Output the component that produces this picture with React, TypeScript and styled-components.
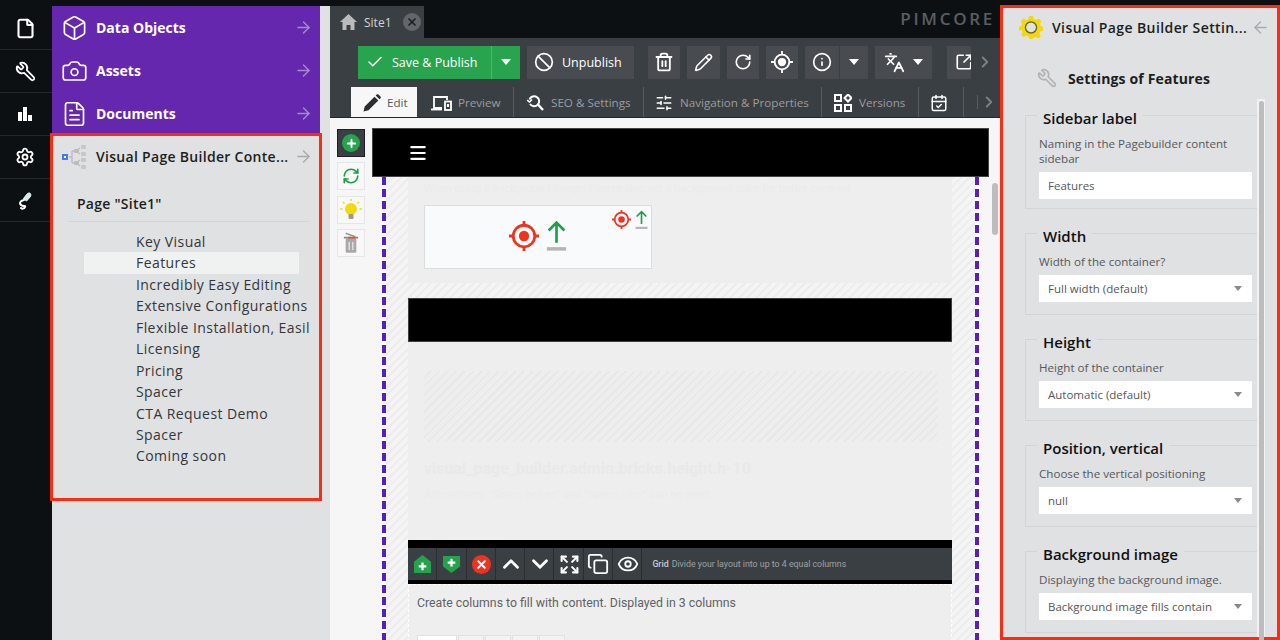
import React, { FC } from "react";
import styled, { createGlobalStyle } from "styled-components";
import {
  ArrowLeft,
  ArrowRight,
  Ban,
  Box,
  CalendarCheck,
  Camera,
  Check,
  ChevronDown,
  ChevronRight,
  ChevronUp,
  Copy,
  Expand,
  Eye,
  File,
  FileText,
  Info,
  Languages,
  Menu,
  Pencil,
  Plus,
  RefreshCw,
  RotateCw,
  Settings,
  SlidersHorizontal,
  SquareArrowOutUpRight,
  Trash2,
  Wrench,
  X,
} from "lucide-react";

const GlobalStyle = createGlobalStyle`
  html, body {
    margin: 0;
    padding: 0;
    background: #0d1013;
  }
  * {
    box-sizing: border-box;
  }
`;

const Page = styled.div`
  display: flex;
  width: 1280px;
  height: 640px;
  overflow: hidden;
  background: #0d1013;
  font-family: "Open Sans", "Liberation Sans", sans-serif;
`;

/* left rail */
const Rail = styled.nav`
  width: 52px;
  flex: none;
  display: flex;
  flex-direction: column;
  padding-top: 7px;
`;

const RailItem = styled.div`
  height: 43px;
  display: flex;
  align-items: center;
  justify-content: center;
  padding-right: 2px;
  color: #fff;
  border-bottom: 1px solid #24282c;
`;

const Mirrored = styled.span`
  display: flex;
  transform: scaleX(-1);
`;

const BarsGlyph = () => (
  <svg width="18" height="18" viewBox="0 0 18 18" fill="#fff">
    <rect x="2" y="7" width="4" height="9" />
    <rect x="7" y="2" width="4" height="14" />
    <rect x="12" y="10" width="4" height="6" />
  </svg>
);

const ProbeGlyph = () => (
  <svg width="20" height="22" viewBox="0 0 20 22" fill="none">
    <path d="M9 11c-4 1-5 3-3 5s5 0 4 2-3 2-4 1" stroke="#fff" strokeWidth="2" strokeLinecap="round" />
    <path d="M8.500 9.500l4-5c2.500-1.500 4 .5 3 3l-4 4.500z" fill="#cfe8f7" stroke="#fff" strokeWidth="1" />
  </svg>
);

/* tree column */
const TreeColumn = styled.aside`
  width: 278px;
  flex: none;
  margin-top: 6px;
  display: flex;
  flex-direction: column;
  background: #e0e1e3;
`;

const Accordion = styled.div`
  width: 268px;
  height: 129px;
  background: #6427ae;
`;

const AccordionRow = styled.div`
  height: 43px;
  display: flex;
  align-items: center;
  padding: 0 7px 0 9px;
  color: #fff;
  font-size: 14px;
  font-weight: 700;
`;

const RowIcon = styled.span`
  width: 27px;
  margin-right: 8px;
  display: flex;
  justify-content: center;
`;

const RowLabel = styled.span`
  flex: 1;
  min-width: 0;
  white-space: nowrap;
`;

const RowArrow = styled.span<{ $light?: boolean }>`
  display: flex;
  flex: none;
  color: ${(p) => (p.$light ? "#a9abae" : "#a58ac9")};
`;

const ContentPanel = styled.section`
  position: relative;
  width: 268px;
  height: 364px;
  outline: 3px solid #fb2c14;
  outline-offset: -1px;
  background: #e0e1e3;
`;

const PanelHead = styled.div`
  height: 43px;
  display: flex;
  align-items: center;
  padding: 0 7px 0 9px;
  color: #1c1e20;
  font-size: 14px;
  font-weight: 600;
  letter-spacing: 0.3px;
`;

const PageTitle = styled.div`
  margin: 15px 11px 0 16px;
  height: 29px;
  padding: 0 0 0 9px;
  border-bottom: 1px solid #d2d3d5;
  color: #1c1e20;
  font-size: 14px;
  font-weight: 600;
  letter-spacing: 0.25px;
  line-height: 22px;
`;

const ContentList = styled.ul`
  list-style: none;
  margin: 9px 0 0 32px;
  padding: 0;
`;

const ContentItem = styled.li<{ $active?: boolean }>`
  height: 21.45px;
  line-height: 21.45px;
  width: 215px;
  padding-left: 52px;
  white-space: nowrap;
  color: #33363a;
  font-size: 14px;
  letter-spacing: 0.43px;
  background: ${(p) => (p.$active ? "#f0f1f1" : "transparent")};
`;

const TreeGlyph = () => (
  <svg width="27" height="26" viewBox="0 0 27 26">
    <rect x="1" y="10" width="6" height="6" fill="#3f7ee8" />
    <rect x="3" y="12" width="2" height="2" fill="#fff" />
    <path d="M8 13h3M11 7v12M11 7h4M11 19h4M15 7l4-3M15 7l4 3M15 19l4-3M15 19l4 3" stroke="#bcbdbf" strokeWidth="1.4" fill="none" />
    <rect x="13" y="5" width="5" height="4" rx="1" fill="#bcbdbf" />
    <rect x="13" y="17" width="5" height="4" rx="1" fill="#bcbdbf" />
    <rect x="20" y="1" width="5" height="4" rx="1" fill="#c6c7c9" />
    <rect x="20" y="8" width="5" height="4" rx="1" fill="#c6c7c9" />
    <rect x="20" y="14" width="5" height="4" rx="1" fill="#c6c7c9" />
    <rect x="20" y="21" width="5" height="4" rx="1" fill="#c6c7c9" />
  </svg>
);

/* centre column */
const Centre = styled.main`
  width: 670px;
  flex: none;
  display: flex;
  flex-direction: column;
`;

const TabBar = styled.div`
  height: 38px;
  flex: none;
  display: flex;
  align-items: flex-end;
  justify-content: space-between;
  padding-right: 7px;
`;

const DocTab = styled.div`
  width: 94px;
  height: 32px;
  display: flex;
  align-items: center;
  padding-left: 10px;
  gap: 7px;
  background: #3a3f43;
  color: #d3d4d5;
  font-size: 12px;
`;

const TabClose = styled.span`
  width: 18px;
  height: 18px;
  margin-left: 4px;
  border-radius: 50%;
  display: flex;
  align-items: center;
  justify-content: center;
  background: #63666a;
  color: #1f2225;
`;

const Logo = styled.div`
  align-self: center;
  margin-top: -1px;
  margin-right: -2px;
  color: #5a5e62;
  font-size: 17px;
  font-weight: 600;
  letter-spacing: 2.7px;
`;

const Toolbar = styled.div`
  height: 47px;
  flex: none;
  display: flex;
  align-items: center;
  padding: 1px 0 0 28px;
  background: #3a3f43;
  color: #fff;
  overflow: hidden;
`;

const ToolGroup = styled.div<{ $gap?: number }>`
  display: flex;
  height: 33px;
  flex: none;
  margin-right: ${(p) => p.$gap ?? 7}px;
  overflow: hidden;
`;

const ToolButton = styled.div<{ $w: number; $pad?: number; $green?: boolean; $divider?: boolean }>`
  width: ${(p) => p.$w}px;
  height: 33px;
  flex: none;
  display: flex;
  align-items: center;
  justify-content: ${(p) => (p.$pad ? "flex-start" : "center")};
  gap: 8px;
  padding-left: ${(p) => p.$pad ?? 0}px;
  font-size: 12.5px;
  background: ${(p) => (p.$green ? "#28a44f" : "#484c50")};
  border-left: ${(p) => (p.$divider ? `1px solid ${p.$green ? "#4fb56f" : "#3a3f43"}` : "none")};
  svg {
    flex: none;
  }
`;

const Caret = styled.span<{ $size?: number; $color?: string }>`
  width: 0;
  height: 0;
  border-left: ${(p) => p.$size ?? 5.5}px solid transparent;
  border-right: ${(p) => p.$size ?? 5.5}px solid transparent;
  border-top: ${(p) => (p.$size ?? 5.5) + 1}px solid ${(p) => p.$color ?? "#fff"};
`;

const EndChevron = styled.span`
  display: flex;
  color: #7d8184;
`;

const TabStrip = styled.div`
  height: 33px;
  flex: none;
  display: flex;
  align-items: flex-end;
  padding-left: 21px;
  background: #3a3f43;
  border-bottom: 1px solid #24272a;
`;

const EditorTab = styled.div<{ $w: number; $pad: number; $gap?: number; $active?: boolean }>`
  width: ${(p) => p.$w}px;
  height: 30px;
  flex: none;
  display: flex;
  align-items: center;
  gap: ${(p) => p.$gap ?? 7}px;
  padding: 1px 0 0 ${(p) => p.$pad}px;
  font-size: 11.65px;
  white-space: nowrap;
  background: ${(p) => (p.$active ? "#f7f7f7" : "transparent")};
  color: ${(p) => (p.$active ? "#55585b" : "#9a9da0")};
  border-right: ${(p) => (p.$active ? "none" : "1px solid #595d61")};
  svg {
    color: ${(p) => (p.$active ? "#2b2e31" : "#fff")};
    flex: none;
  }
`;

const TabOverflow = styled.div`
  height: 30px;
  display: flex;
  align-items: center;
  gap: 2px;
  padding-left: 13px;
  color: #7d8184;
`;

const TabTick = styled.span`
  width: 1px;
  height: 14px;
  background: #595d61;
`;

const Editor = styled.div`
  flex: 1;
  min-height: 0;
  display: flex;
  background: #f6f6f6;
`;

const BrickBar = styled.div`
  width: 42px;
  flex: none;
  padding: 11px 0 0 7px;
  display: flex;
  flex-direction: column;
  gap: 5.4px;
`;

const BrickButton = styled.div<{ $dark?: boolean }>`
  width: 28px;
  height: 28px;
  display: flex;
  align-items: center;
  justify-content: center;
  background: ${(p) => (p.$dark ? "#3a3f43" : "#f8f8f8")};
  border: 1px solid ${(p) => (p.$dark ? "#1d2022" : "#e6e6e6")};
`;

const Round = styled.span<{ $bg: string; $size: number }>`
  width: ${(p) => p.$size}px;
  height: ${(p) => p.$size}px;
  border-radius: 50%;
  display: flex;
  align-items: center;
  justify-content: center;
  background: ${(p) => p.$bg};
  color: #fff;
`;

const Viewport = styled.div`
  width: 617px;
  flex: none;
  padding-top: 10px;
  display: flex;
  flex-direction: column;
  overflow: hidden;
`;

const SiteNav = styled.div`
  height: 49px;
  flex: none;
  display: flex;
  align-items: center;
  padding: 0 0 0 35px;
  background: #000;
  color: #fff;
  border: 1px solid #444;
`;

const Canvas = styled.div`
  flex: 1;
  min-height: 0;
  margin: 0 10px;
  padding: 0 4px;
  overflow: hidden;
  background-color: #fff;
  background-image:
    repeating-linear-gradient(180deg, #5a1fb8 0 8px, #fff 8px 12px),
    repeating-linear-gradient(180deg, #5a1fb8 0 8px, #fff 8px 12px);
  background-size: 4px 100%;
  background-position: left top, right top;
  background-repeat: no-repeat;
`;

const Hatch = styled.div`
  height: 100%;
  padding: 0 23px 0 22px;
  background: repeating-linear-gradient(135deg, #f4f4f4 0 4px, #ececec 4px 6px);
`;

const Brick = styled.div`
  background: #eee;
`;

const FirstBrick = styled(Brick)`
  height: 106px;
  padding: 4px 16px 0;
  overflow: hidden;
`;

const GhostText = styled.div`
  font-family: Roboto, "Liberation Sans", sans-serif;
  font-size: 11px;
  line-height: 15px;
  color: #ebebeb;
  white-space: nowrap;
`;

const GhostHeading = styled.div`
  margin-bottom: 7px;
  font-family: Roboto, "Liberation Sans", sans-serif;
  font-size: 16px;
  font-weight: 700;
  line-height: 22px;
  color: #e9e9e9;
  white-space: nowrap;
`;

const UploadBox = styled.div`
  position: relative;
  width: 228px;
  height: 64px;
  margin-top: 9px;
  display: flex;
  align-items: center;
  justify-content: center;
  gap: 7px;
  padding-bottom: 3px;
  background: #f9fafb;
  border: 1px solid #dcdddd;
`;

const MiniUpload = styled.div`
  position: absolute;
  top: 4px;
  right: 3px;
  display: flex;
  gap: 4px;
`;

const BlackBar = styled.div`
  height: 44px;
  margin-top: 15px;
  background: #000;
  border: 1px solid #3f3f3f;
`;

const SecondBrick = styled(Brick)`
  height: 198px;
  padding: 29px 14px 0 16px;
`;

const HatchBox = styled.div`
  height: 71px;
  margin-bottom: 16px;
  background: repeating-linear-gradient(135deg, #eee 0 4px, #e8e8e8 4px 6px);
`;

const BrickHead = styled.div`
  height: 44px;
  padding-top: 4px;
  display: flex;
  align-items: center;
  background: #000;
`;

const BrickTools = styled.div`
  height: 32px;
  flex: 1;
  display: flex;
  align-items: stretch;
  gap: 1px;
  padding-left: 1px;
  background: #3a3f43;
`;

const BrickTool = styled.div`
  width: 28.3px;
  flex: none;
  display: flex;
  align-items: center;
  justify-content: center;
  color: #fff;
  background: #3a3f43;
  border-right: 1px solid #2b2e31;
`;

const BrickCaption = styled.div`
  flex: 1;
  display: flex;
  align-items: center;
  padding-left: 9px;
  font-family: Roboto, "Liberation Sans", sans-serif;
  font-size: 8.8px;
  color: #9fa2a4;
  white-space: nowrap;
  b {
    margin-right: 3px;
    font-weight: 500;
    color: #c9cbcc;
  }
`;

const ColumnsBlock = styled(Brick)`
  height: 100%;
  padding: 9px 8px 0;
  border-left: 1px dashed #fff;
  border-right: 1px dashed #fff;
  border-top: 1px dashed #fff;
`;

const ColumnsText = styled.div`
  font-family: Roboto, "Liberation Sans", sans-serif;
  font-size: 12.3px;
  line-height: 18px;
  color: #5f6265;
`;

const ColumnTabs = styled.div`
  display: flex;
  margin-top: 23px;
  gap: 1px;
`;

const ColumnTab = styled.div<{ $active?: boolean }>`
  width: ${(p) => (p.$active ? 40 : 26)}px;
  height: 12px;
  background: ${(p) => (p.$active ? "#fff" : "#f3f3f3")};
  border: 1px solid #e2e2e2;
`;

const ViewScroll = styled.div`
  width: 11px;
  flex: none;
  padding: 65px 2px 0 3px;
`;

const ScrollThumb = styled.div<{ $h: number }>`
  height: ${(p) => p.$h}px;
  border-radius: 3px;
  background: #bdbdbd;
`;

/* settings column */
const SettingsPanel = styled.aside`
  width: 280px;
  flex: none;
  margin-top: 5px;
  height: 635px;
  display: flex;
  flex-direction: column;
  border: 3px solid #fb2c14;
  background: #e0e1e3;
`;

const SettingsHead = styled.div`
  height: 40px;
  flex: none;
  display: flex;
  align-items: center;
  padding: 0 7px 2px 16px;
  gap: 9px;
  color: #1c1e20;
  font-size: 14px;
  font-weight: 600;
  letter-spacing: 0.4px;
  svg {
    flex: none;
  }
`;

const SubHead = styled.div`
  height: 51px;
  flex: none;
  display: flex;
  align-items: center;
  padding: 9px 0 0 34px;
  gap: 11px;
  color: #1c1e20;
  font-size: 14px;
  font-weight: 700;
  letter-spacing: 0.15px;
  svg {
    color: #b2b3b5;
  }
`;

const SettingsBody = styled.div`
  flex: 1;
  min-height: 0;
  display: flex;
`;

const FormColumn = styled.form`
  width: 254px;
  flex: none;
  padding: 9px 0 0 22px;
  overflow: hidden;
`;

const Field = styled.fieldset<{ $select: boolean }>`
  margin: 0 0 17px;
  padding: 0 5px ${(p) => (p.$select ? 12 : 9)}px 13px;
  border: 1px solid #d3d4d6;
  border-right: none;
`;

const FieldLegend = styled.legend`
  margin-left: -2px;
  padding: 0 6px;
  height: 14px;
  line-height: 20px;
  color: #111;
  font-size: 15px;
  font-weight: 600;
`;

const FieldHint = styled.div`
  margin-top: 14px;
  color: #55585b;
  font-size: 11.6px;
  line-height: 15px;
`;

const FieldControl = styled.div`
  height: 27px;
  margin-top: 6px;
  display: flex;
  align-items: center;
  justify-content: space-between;
  padding: 0 10px 0 9px;
  background: #fff;
  color: #55585b;
  font-size: 11.5px;
`;

const ScrollTrack = styled.div`
  width: 8px;
  flex: none;
  padding: 2px 1px 0 2px;
  background: #f1f1f2;
`;

const GearGlyph = () => (
  <svg width="24" height="24" viewBox="0 0 24 24">
    <path
      d="M10 1h4l.6 3 2.4 1 2.600-1.600 2.800 2.800L20.800 8.800l1 2.200 2.200.8v4l-2.600.6-1 2.400 1.400 2.600-2.800 2.100-2.400-1.500-2.400 1L13.600 24h-3.200l-.7-2.500-2.500-1-2.300 1.500-2.800-2.100 1.400-2.600-1-2.400L0 15.800v-4l2.200-.8 1-2.200L1.600 6.200l2.800-2.800L7 5l2.400-1z"
      fill="#f4d80f"
    />
    <circle cx="12" cy="12.500" r="5.500" fill="none" stroke="#6b6420" strokeWidth="1.500" />
    <circle cx="12" cy="12.500" r="4.700" fill="#e0e1e3" />
  </svg>
);

const TargetGlyph: FC<{ size: number }> = ({ size }) => (
  <svg width={size} height={size} viewBox="0 0 32 32" fill="none">
    <circle cx="16" cy="16" r="11.500" stroke="#f0331f" strokeWidth="3" />
    <circle cx="16" cy="16" r="5.500" fill="#f0331f" />
    <path d="M16 0v5M16 27v5M0 16h5M27 16h5" stroke="#f0331f" strokeWidth="3" />
  </svg>
);

const UploadGlyph: FC<{ size: number }> = ({ size }) => (
  <svg width={size} height={size * 1.5} viewBox="0 0 24 36" fill="none">
    <path d="M12 26V3M3 12l9-9 9 9" stroke="#1f9e4a" strokeWidth="3" />
    <rect x="1" y="31" width="22" height="4" fill="#b4b5b5" />
  </svg>
);

const BulbGlyph = () => (
  <svg width="22" height="24" viewBox="0 0 22 24" fill="none">
    <circle cx="11" cy="11" r="6" fill="#f5d90f" />
    <rect x="8.500" y="16" width="5" height="5" rx="1" fill="#9a9a92" />
    <path d="M11 1v2M3 4l1.500 1.500M19 4l-1.500 1.500M0 11h2.500M19.500 11H22" stroke="#f5d90f" strokeWidth="1.500" />
  </svg>
);

const BinGlyph = () => (
  <svg width="16" height="22" viewBox="0 0 18 24" fill="none">
    <rect x="3" y="7" width="12" height="16" rx="1.500" fill="#a9a9a9" />
    <path d="M7 11v9M11 11v9" stroke="#e4e4e4" strokeWidth="1.500" />
    <path d="M1 6h16" stroke="#8a8a8a" strokeWidth="2" />
    <path d="M3 1l11 4" stroke="#9a9a9a" strokeWidth="2" />
    <path d="M6 6h8" stroke="#ef4b3a" strokeWidth="2" />
  </svg>
);

const HouseGlyph = () => (
  <svg width="17" height="16" viewBox="0 0 17 16" fill="#b9bbbc">
    <path d="M8.500 0L17 8h-2.500v8h-4v-5h-4v5h-4V8H0z" />
  </svg>
);

const ShieldGlyph: FC<{ up?: boolean }> = ({ up }) => (
  <svg width="19" height="19" viewBox="0 0 20 20">
    <path d={up ? "M10 0l9 7v12H1V7z" : "M1 1h18v11l-9 7-9-7z"} fill="#25a24d" />
    <path d={up ? "M10 8v8M6 12h8" : "M10 4v8M6 8h8"} stroke="#fff" strokeWidth="2.400" />
  </svg>
);

const TargetWhite = () => (
  <svg width="22" height="22" viewBox="0 0 24 24" fill="none" stroke="#fff" strokeWidth="2">
    <circle cx="12" cy="12" r="8" />
    <circle cx="12" cy="12" r="3.500" fill="#fff" />
    <path d="M12 0v4M12 20v4M0 12h4M20 12h4" />
  </svg>
);

const ShapesGlyph = () => (
  <svg width="18" height="18" viewBox="0 0 18 18" fill="none" stroke="#fff" strokeWidth="2">
    <rect x="1" y="1" width="6" height="6" />
    <rect x="1" y="11" width="6" height="6" />
    <rect x="11" y="11" width="6" height="6" />
    <path d="M14 0.500L17.500 4 14 7.500 10.500 4z" />
  </svg>
);

const DevicesGlyph = () => (
  <svg width="21" height="16" viewBox="0 0 21 16" fill="none" stroke="#fff" strokeWidth="1.800">
    <path d="M11 13H3V2h13v3" />
    <path d="M0 14.500h11" />
    <rect x="14" y="6.500" width="6" height="8.500" fill="#3a3f43" />
    <path d="M17 9v3" strokeWidth="2.200" />
  </svg>
);

const SeoGlyph = () => (
  <svg width="17" height="17" viewBox="0 0 17 17" fill="none" stroke="#fff" strokeWidth="2">
    <path d="M2.500 5.500A5 5 0 1 1 3 10" />
    <path d="M11 10.500l5 5.500" strokeWidth="2.400" />
    <path d="M0 6l2.500 2L5 5.500" strokeWidth="1.600" />
  </svg>
);

const SolidPencil = () => (
  <svg width="18" height="18" viewBox="0 0 18 18" fill="#2b2e31">
    <path d="M0.500 17.500l1.200-5L11.500 2.700l3.800 3.800L5.500 16.300zM12.700 1.500l1-1c.5-.5 1.200-.5 1.700 0l2.100 2.100c.5.5.5 1.200 0 1.700l-1 1z" />
  </svg>
);

const accordion = [
  { label: "Data Objects", icon: <Box size={30} strokeWidth={1.500} /> },
  { label: "Assets", icon: <Camera size={30} strokeWidth={1.500} /> },
  { label: "Documents", icon: <FileText size={30} strokeWidth={1.500} /> },
];

const contents = [
  "Key Visual",
  "Features",
  "Incredibly Easy Editing",
  "Extensive Configurations",
  "Flexible Installation, Easil",
  "Licensing",
  "Pricing",
  "Spacer",
  "CTA Request Demo",
  "Spacer",
  "Coming soon",
];

const fields = [
  { legend: "Sidebar label", hint: "Naming in the Pagebuilder content sidebar", value: "Features", select: false },
  { legend: "Width", hint: "Width of the container?", value: "Full width (default)", select: true },
  { legend: "Height", hint: "Height of the container", value: "Automatic (default)", select: true },
  { legend: "Position, vertical", hint: "Choose the vertical positioning", value: "null", select: true },
  { legend: "Background image", hint: "Displaying the background image.", value: "Background image fills contain", select: true },
];

const App: FC = () => (
  <Page>
    <GlobalStyle />
    <Rail>
      <RailItem><File size={21} strokeWidth={2.400} /></RailItem>
      <RailItem><Mirrored><Wrench size={21} strokeWidth={2} /></Mirrored></RailItem>
      <RailItem><BarsGlyph /></RailItem>
      <RailItem><Settings size={20} strokeWidth={2.200} /></RailItem>
      <RailItem><ProbeGlyph /></RailItem>
    </Rail>

    <TreeColumn>
      <Accordion>
        {accordion.map((row) => (
          <AccordionRow key={row.label}>
            <RowIcon>{row.icon}</RowIcon>
            <RowLabel>{row.label}</RowLabel>
            <RowArrow><ArrowRight size={19} strokeWidth={1.800} /></RowArrow>
          </AccordionRow>
        ))}
      </Accordion>
      <ContentPanel>
        <PanelHead>
          <RowIcon><TreeGlyph /></RowIcon>
          <RowLabel>Visual Page Builder Conte...</RowLabel>
          <RowArrow $light><ArrowRight size={19} strokeWidth={1.800} /></RowArrow>
        </PanelHead>
        <PageTitle>Page "Site1"</PageTitle>
        <ContentList>
          {contents.map((item, i) => (
            <ContentItem key={i} $active={item === "Features"}>{item}</ContentItem>
          ))}
        </ContentList>
      </ContentPanel>
    </TreeColumn>

    <Centre>
      <TabBar>
        <DocTab>
          <HouseGlyph />
          Site1
          <TabClose><X size={12} strokeWidth={3.500} /></TabClose>
        </DocTab>
        <Logo>PIMCORE</Logo>
      </TabBar>

      <Toolbar>
        <ToolGroup>
          <ToolButton $w={133} $pad={8} $green><Check size={18} />Save &amp; Publish</ToolButton>
          <ToolButton $w={29} $green $divider><Caret /></ToolButton>
        </ToolGroup>
        <ToolGroup $gap={14}>
          <ToolButton $w={107} $pad={7}><Ban size={20} />Unpublish</ToolButton>
        </ToolGroup>
        <ToolGroup><ToolButton $w={32}><Trash2 size={20} strokeWidth={2.200} /></ToolButton></ToolGroup>
        <ToolGroup><ToolButton $w={33}><Pencil size={19} /></ToolButton></ToolGroup>
        <ToolGroup><ToolButton $w={32}><RotateCw size={18} strokeWidth={2.200} /></ToolButton></ToolGroup>
        <ToolGroup><ToolButton $w={32}><TargetWhite /></ToolButton></ToolGroup>
        <ToolGroup>
          <ToolButton $w={34}><Info size={20} /></ToolButton>
          <ToolButton $w={29} $divider><Caret /></ToolButton>
        </ToolGroup>
        <ToolGroup $gap={15}>
          <ToolButton $w={57}><Languages size={21} /><Caret /></ToolButton>
        </ToolGroup>
        <ToolGroup $gap={5}>
          <ToolButton $w={24} $pad={8}><SquareArrowOutUpRight size={18} strokeWidth={2.200} /></ToolButton>
        </ToolGroup>
        <EndChevron><ChevronRight size={18} strokeWidth={2.500} /></EndChevron>
      </Toolbar>

      <TabStrip>
        <EditorTab $w={66} $pad={12} $gap={6} $active><SolidPencil />Edit</EditorTab>
        <EditorTab $w={97} $pad={14} $gap={6}><DevicesGlyph />Preview</EditorTab>
        <EditorTab $w={130} $pad={13}><SeoGlyph />SEO &amp; Settings</EditorTab>
        <EditorTab $w={178} $pad={11}><SlidersHorizontal size={18} />Navigation &amp; Properties</EditorTab>
        <EditorTab $w={97} $pad={12}><ShapesGlyph />Versions</EditorTab>
        <EditorTab $w={45} $pad={11}><CalendarCheck size={18} /></EditorTab>
        <TabOverflow>
          <TabTick />
          <ChevronRight size={18} strokeWidth={2.500} />
        </TabOverflow>
      </TabStrip>

      <Editor>
        <BrickBar>
          <BrickButton $dark><Round $bg="#27a34f" $size={18}><Plus size={13} strokeWidth={3.500} /></Round></BrickButton>
          <BrickButton><RefreshCw size={18} color="#1f9e4a" strokeWidth={2.200} /></BrickButton>
          <BrickButton><BulbGlyph /></BrickButton>
          <BrickButton><BinGlyph /></BrickButton>
        </BrickBar>

        <Viewport>
          <SiteNav><Menu size={20} strokeWidth={2.600} /></SiteNav>
          <Canvas>
            <Hatch>
              <FirstBrick>
                <GhostText>When using a background image: Please also set a background color for better contrast.</GhostText>
                <UploadBox>
                  <TargetGlyph size={30} />
                  <UploadGlyph size={21} />
                  <MiniUpload>
                    <TargetGlyph size={19} />
                    <UploadGlyph size={13} />
                  </MiniUpload>
                </UploadBox>
              </FirstBrick>
              <BlackBar />
              <SecondBrick>
                <HatchBox />
                <GhostHeading>visual_page_builder.admin.bricks.height.h-10</GhostHeading>
                <GhostText>Alternatively, "Space before" and "Space after" can be used.</GhostText>
              </SecondBrick>
              <BrickHead>
                <BrickTools>
                  <BrickTool><ShieldGlyph up /></BrickTool>
                  <BrickTool><ShieldGlyph /></BrickTool>
                  <BrickTool><Round $bg="#f0331f" $size={19}><X size={13} strokeWidth={3.500} /></Round></BrickTool>
                  <BrickTool><ChevronUp size={26} strokeWidth={2.600} /></BrickTool>
                  <BrickTool><ChevronDown size={26} strokeWidth={2.600} /></BrickTool>
                  <BrickTool><Expand size={21} strokeWidth={2.400} /></BrickTool>
                  <BrickTool><Copy size={22} strokeWidth={2} /></BrickTool>
                  <BrickTool><Eye size={22} strokeWidth={2} /></BrickTool>
                  <BrickCaption><b>Grid</b> Divide your layout into up to 4 equal columns</BrickCaption>
                </BrickTools>
              </BrickHead>
              <ColumnsBlock>
                <ColumnsText>Create columns to fill with content. Displayed in 3 columns</ColumnsText>
                <ColumnTabs>
                  <ColumnTab $active />
                  <ColumnTab />
                  <ColumnTab />
                  <ColumnTab />
                  <ColumnTab />
                </ColumnTabs>
              </ColumnsBlock>
            </Hatch>
          </Canvas>
        </Viewport>
        <ViewScroll><ScrollThumb $h={52} /></ViewScroll>
      </Editor>
    </Centre>

    <SettingsPanel>
      <SettingsHead>
        <GearGlyph />
        <RowLabel>Visual Page Builder Settin...</RowLabel>
        <RowArrow $light><ArrowLeft size={19} strokeWidth={1.800} /></RowArrow>
      </SettingsHead>
      <SubHead>
        <Mirrored><Wrench size={20} /></Mirrored>
        Settings of Features
      </SubHead>
      <SettingsBody>
        <FormColumn>
          {fields.map((f) => (
            <Field key={f.legend} $select={f.select}>
              <FieldLegend>{f.legend}</FieldLegend>
              <FieldHint>{f.hint}</FieldHint>
              <FieldControl>
                {f.value}
                {f.select && <Caret $size={4} $color="#8a8a8a" />}
              </FieldControl>
            </Field>
          ))}
        </FormColumn>
        <ScrollTrack><ScrollThumb $h={600} /></ScrollTrack>
      </SettingsBody>
    </SettingsPanel>
  </Page>
);

export default App;
